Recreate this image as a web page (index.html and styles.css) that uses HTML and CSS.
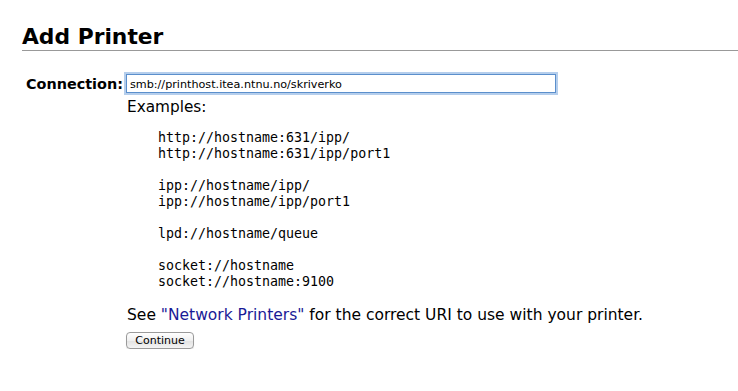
FILE: index.html
```html
<!DOCTYPE html>
<html>
<head>
<meta charset="utf-8">
<link rel="stylesheet" href="styles.css">
</head>
<body>
<h2 class="title">Add Printer</h2>
<div class="form">
  <div class="row">
    <div class="label">Connection:</div>
    <div class="value">
      <input class="uri" type="text" value="smb://printhost.itea.ntnu.no/skriverko">
      <div class="examples-title">Examples:</div>
      <div class="examples">
        <div class="group">http://hostname:631/ipp/<br>http://hostname:631/ipp/port1</div>
        <div class="group">ipp://hostname/ipp/<br>ipp://hostname/ipp/port1</div>
        <div class="group">lpd://hostname/queue</div>
        <div class="group">socket://hostname<br>socket://hostname:9100</div>
      </div>
      <p class="see">See <a class="link" href="#">"Network Printers"</a> for the correct URI to use with your printer.</p>
      <button class="btn" type="button">Continue</button>
    </div>
  </div>
</div>
</body>
</html>
```
FILE: styles.css
```css
html, body {
  margin: 0;
  padding: 0;
  background: #fff;
}
body {
  font-family: "DejaVu Sans", "Liberation Sans", sans-serif;
  color: #000;
}
.title {
  margin: 0 0 0 22px;
  padding-top: 24px;
  font-size: 21.8px;
  font-weight: bold;
  line-height: 26px;
  border-bottom: 1px solid #999;
  padding-bottom: 0;
}
.form {
  padding: 23px 0 0 26px;
}
.row {
  display: flex;
  align-items: flex-start;
}
.label {
  font-weight: bold;
  font-size: 14.4px;
  line-height: 20px;
  margin-top: 0;
  width: 96px;
  text-align: right;
  margin-right: 4px;
}
.value {
  display: flex;
  flex-direction: column;
  align-items: flex-start;
}
.uri {
  width: 430px;
  height: 19px;
  box-sizing: border-box;
  margin: 0;
  padding: 1px 3px 0;
  font-family: "DejaVu Sans", sans-serif;
  font-size: 11.2px;
  color: #000;
  border: 1px solid #5b8fcc;
  box-shadow: 0 0 0 2px rgba(120, 165, 220, 0.55);
  outline: none;
}
.examples-title {
  font-size: 15.3px;
  line-height: 18px;
  margin-top: 5px;
  margin-left: 1px;
}
.examples {
  margin: 14px 0 0 32px;
  font-family: "DejaVu Sans Mono", monospace;
  font-size: 13.3px;
  line-height: 16px;
  display: flex;
  flex-direction: column;
  gap: 16px;
}
.see {
  margin: 16px 0 0 1px;
  font-size: 15.5px;
  line-height: 18px;
}
.link {
  color: #1a1a96;
  text-decoration: none;
}
.btn {
  margin-top: 8px;
  width: 68px;
  height: 17px;
  padding: 0;
  font-family: "DejaVu Sans", sans-serif;
  font-size: 11px;
  color: #000;
  background: linear-gradient(#ffffff, #f0f0f0 50%, #e2e2e2 51%, #f4f4f4);
  border: 1px solid #9a9a9a;
  border-radius: 4px;
  box-shadow: 0 1px 1px rgba(0,0,0,0.1);
}
```
